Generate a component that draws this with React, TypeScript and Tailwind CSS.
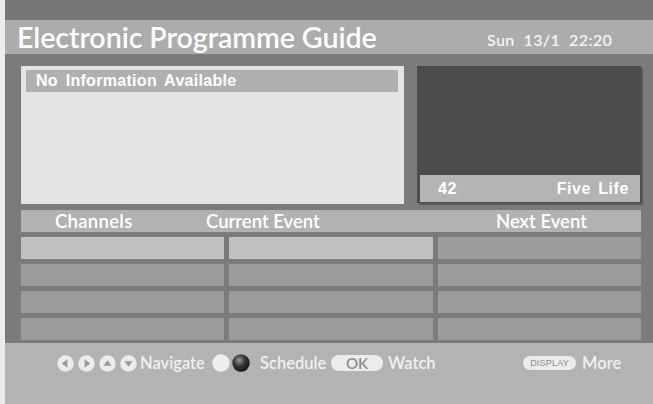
import React from 'react';

const futura = "font-['Lato','Open_Sans',sans-serif]";

function ArrowBall({ dir }: { dir: 'left' | 'right' | 'up' | 'down' }) {
  const pts = {
    left: '11,4.5 11,13.5 5,9',
    right: '7,4.5 7,13.5 13,9',
    up: '4.5,11.5 13.5,11.5 9,5.5',
    down: '4.5,6.5 13.5,6.5 9,12.5',
  }[dir];
  return (
    <svg width="17" height="17" viewBox="0 0 18 18" className="shrink-0">
      <circle cx="9" cy="9" r="8.7" fill="#ececec" />
      <polygon points={pts} fill="#9a9a9a" />
    </svg>
  );
}

function Sphere({ dark }: { dark?: boolean }) {
  return (
    <svg width="18" height="18" viewBox="0 0 18 18" className="shrink-0">
      <defs>
        <radialGradient id="ball" cx="0.4" cy="0.35" r="0.7">
          <stop offset="0" stopColor="#9a9a9a" />
          <stop offset="0.45" stopColor="#3a3a3a" />
          <stop offset="1" stopColor="#111" />
        </radialGradient>
      </defs>
      <circle cx="9" cy="9" r="8.7" fill={dark ? 'url(#ball)' : '#eeeeee'} />
    </svg>
  );
}

export default function App() {
  const rows = [0, 1, 2, 3];
  return (
    <div className="w-[653px] h-[404px] flex overflow-hidden bg-[#7b7b7b]">
      <div className="w-[5px] bg-[#ececec] shrink-0" />
      <div className="flex-1 flex flex-col">
        <div className="h-[20px] bg-[#777777]" />
        <div className={`h-[34px] bg-[#acacac] flex items-center pl-[12px] text-white ${futura}`}>
          <span className="w-[470px] text-[28.7px] font-semibold leading-none tracking-[-0.1px] whitespace-nowrap">Electronic Programme Guide</span>
          <span className="mt-[6px] text-[16px] font-semibold leading-none tracking-[0.4px] text-[#f4f4f4] whitespace-pre">Sun  13/1  22:20</span>
        </div>

        <div className="flex-1 pl-[16px] pr-[12px] pt-[12px] flex flex-col">
          <div className="flex h-[138px] gap-[13px]">
            <div className="w-[383px] bg-[#e4e4e4] pl-[5px] pr-[6px] pt-[4px]">
              <div className="h-[22px] bg-[#b0b0b0] flex items-center pl-[10px] font-['Liberation_Sans',Arial,sans-serif] font-bold text-[16px] text-white tracking-[0.3px] [word-spacing:3px]">
                No Information Available
              </div>
            </div>
            <div className="flex-1 bg-[#4c4c4c] flex flex-col justify-end pl-[3px] pr-[1px] pb-[1px] shadow-[2px_2px_0_#5a5a5a] h-[137px]">
              <div className="h-[27px] bg-[#b4b4b4] flex items-center justify-between pl-[18px] pr-[11px] font-['Liberation_Sans',Arial,sans-serif] font-bold text-[16px] text-white">
                <span className="tracking-[0.5px]">42</span>
                <span className="tracking-[0.6px] [word-spacing:2px]">Five Life</span>
              </div>
            </div>
          </div>

          <div className={`mt-[6px] h-[22px] bg-[#b2b2b2] flex items-center text-white text-[18.5px] font-semibold leading-none ${futura}`}>
            <span className="ml-[34px] w-[151px] tracking-[0.3px]">Channels</span>
            <span className="w-[290px]">Current Event</span>
            <span>Next Event</span>
          </div>

          <div className="mt-[5px] flex flex-col gap-[5px]">
            {rows.map(r => (
              <div key={r} className="grid grid-cols-3 gap-[5px] h-[22px]">
                <div className={r === 0 ? 'bg-[#c0c0c0]' : 'bg-[#9b9b9b]'} />
                <div className={r === 0 ? 'bg-[#c0c0c0]' : 'bg-[#9b9b9b]'} />
                <div className="bg-[#9b9b9b]" />
              </div>
            ))}
          </div>
        </div>

        <div className={`h-[61px] bg-[#b3b3b3] flex items-start pt-[10px] pl-[52px] text-[#f0f0f0] text-[16.5px] font-semibold leading-none ${futura}`}>
          <div className="flex items-center h-[20px]">
            <div className="flex items-center gap-[4px]">
              <ArrowBall dir="left" />
              <ArrowBall dir="right" />
              <ArrowBall dir="up" />
              <ArrowBall dir="down" />
            </div>
            <span className="ml-[3px] w-[66px] whitespace-nowrap">Navigate</span>
            <div className="ml-[6px] flex items-center gap-[2px]">
              <Sphere />
              <Sphere dark />
            </div>
            <span className="ml-[10px] w-[66px] whitespace-nowrap">Schedule</span>
            <span className="ml-[5px] w-[52px] h-[16px] rounded-full bg-[#ececec] text-[#8c8c8c] text-[15px] flex items-center justify-center leading-none">OK</span>
            <span className="ml-[5px] w-[44px] whitespace-nowrap">Watch</span>
            <span className="ml-[91px] w-[53px] h-[14px] rounded-full bg-[#ececec] text-[#8c8c8c] text-[9px] flex items-center justify-center leading-none font-['Liberation_Sans',Arial,sans-serif] font-normal tracking-[0.2px]">DISPLAY</span>
            <span className="ml-[6px] whitespace-nowrap">More</span>
          </div>
        </div>
      </div>
    </div>
  );
}
